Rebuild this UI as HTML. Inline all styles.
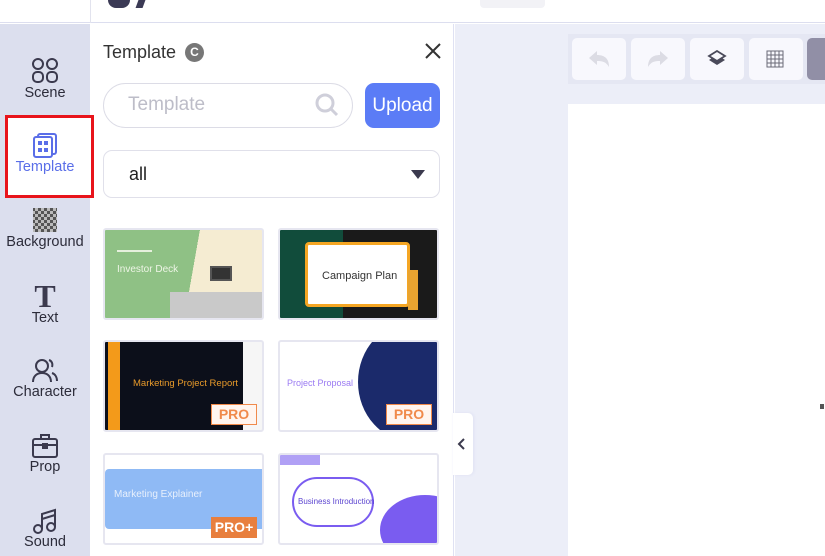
<!DOCTYPE html>
<html><head><meta charset="utf-8"><style>
*{margin:0;padding:0;box-sizing:border-box}
body{width:825px;height:556px;overflow:hidden;position:relative;background:#fff;font-family:"Liberation Sans",sans-serif}
.abs{position:absolute}
#top{left:0;top:0;width:825px;height:23px;background:#fff;border-bottom:1px solid #dcdeef}
#side{left:0;top:24px;width:90px;height:532px;background:#dcdfee}
.it{position:absolute;left:0;width:90px;text-align:center;font-size:14.5px;color:#2c2c3a;z-index:3}
.it svg{display:block;margin:0 auto}
#panel{left:90px;top:24px;width:364px;height:532px;background:#fff;border-right:1px solid #dfe1f3}
#canvasbg{left:455px;top:24px;width:370px;height:532px;background:#eceef8}
.btn{position:absolute;top:38px;width:54px;height:42px;background:#f8f8fd;border-radius:5px}
.card{position:absolute;width:161px;height:92px;border-radius:3px;border:2px solid #e6e6f0;overflow:hidden}
.pro{position:absolute;right:5px;bottom:5px;width:46px;height:21px;border:1.5px solid #f08a4b;background:#fff5ef;color:#f08a4b;font-weight:bold;font-size:14px;text-align:center;line-height:18px}
</style></head><body>
<div id="top" class="abs"></div>
<div class="abs" style="left:90px;top:0;width:1px;height:23px;background:#e2e3ee"></div>
<div class="abs" style="left:108px;top:0;width:22px;height:8px;background:#3b3a55;border-radius:0 0 8px 8px"></div>
<div class="abs" style="left:137px;top:0;width:7px;height:8px;background:#3b3a55;transform:skewX(-20deg)"></div>
<div class="abs" style="left:480px;top:0;width:65px;height:8px;background:#f2f2f6;border-radius:0 0 4px 4px"></div>

<div id="side" class="abs"></div>
<div id="panel" class="abs"></div>
<div class="abs" style="left:5px;top:115px;width:89px;height:83px;border:3px solid #e8141b;background:#fff;z-index:2"></div>
<div class="it" style="top:58px"><svg width="28" height="26" viewBox="0 0 28 26" fill="none" stroke="#3b3a4e" stroke-width="2"><rect x="2" y="1" width="10" height="10" rx="5"/><rect x="16" y="1" width="10" height="10" rx="5"/><rect x="2" y="14" width="10" height="10" rx="4"/><rect x="16" y="14" width="10" height="10" rx="4"/></svg><div style="margin-top:1px">Scene</div></div>
<div class="it" style="top:133px;color:#5a6ee8"><svg width="26" height="26" viewBox="0 0 26 26"><rect x="6" y="1" width="18" height="20" rx="2" fill="none" stroke="#5a6ee8" stroke-width="2"/><rect x="2" y="4" width="18" height="20" rx="2" fill="#fff" stroke="#5a6ee8" stroke-width="2"/><rect x="6" y="8" width="4" height="4" fill="#5a6ee8"/><rect x="12" y="8" width="4" height="4" fill="#5a6ee8"/><rect x="6" y="15" width="4" height="4" fill="#5a6ee8"/><rect x="12" y="15" width="4" height="4" fill="#5a6ee8"/></svg><div>Template</div></div>
<div class="it" style="top:208px"><svg width="26" height="24" viewBox="0 0 26 24"><defs><pattern id="ck" width="6" height="6" patternUnits="userSpaceOnUse"><rect width="3" height="3" fill="#555"/><rect x="3" y="3" width="3" height="3" fill="#555"/><rect x="3" width="3" height="3" fill="#bbb"/><rect y="3" width="3" height="3" fill="#bbb"/></pattern></defs><rect x="1" y="0" width="24" height="24" fill="url(#ck)"/></svg><div style="margin-top:2px">Background</div></div>
<div class="it" style="top:282px"><div style="font-family:'Liberation Serif',serif;font-weight:bold;font-size:32px;line-height:28px;color:#3b3a4e">T</div><div>Text</div></div>
<div class="it" style="top:358px"><svg width="28" height="26" viewBox="0 0 28 26" fill="none" stroke="#3b3a4e" stroke-width="2"><circle cx="11" cy="8" r="6"/><path d="M2 24c0-6 4-9 9-9s9 3 9 9M18 2c3 1 4 4 3 7M21 15c3 1 5 4 5 8"/></svg><div>Character</div></div>
<div class="it" style="top:433px"><svg width="28" height="26" viewBox="0 0 28 26" fill="none" stroke="#3b3a4e" stroke-width="2"><rect x="2" y="6" width="24" height="18" rx="2"/><path d="M10 6V2h8v4M2 12h24"/><rect x="12" y="11" width="4" height="4" fill="#3b3a4e"/></svg><div>Prop</div></div>
<div class="it" style="top:508px"><svg width="28" height="26" viewBox="0 0 28 26" fill="none" stroke="#3b3a4e" stroke-width="2"><circle cx="7" cy="21" r="4"/><circle cx="20" cy="19" r="4"/><path d="M11 21V6l13-4v17M11 11l13-4"/></svg><div>Sound</div></div>

<div class="abs" style="left:103px;top:42px;font-size:18px;color:#333">Template</div>
<div class="abs" style="left:185px;top:43px;width:19px;height:19px;border-radius:50%;background:#777;color:#fff;font-size:12px;font-weight:bold;text-align:center;line-height:19px">C</div>
<svg class="abs" style="left:424px;top:42px" width="18" height="18" viewBox="0 0 18 18" stroke="#333" stroke-width="2"><path d="M2 2l14 14M16 2L2 16"/></svg>
<div class="abs" style="left:103px;top:83px;width:250px;height:45px;border:1px solid #dcdce6;border-radius:23px"></div>
<div class="abs" style="left:128px;top:94px;font-size:19px;color:#bdbdc8">Template</div>
<svg class="abs" style="left:314px;top:92px" width="26" height="26" viewBox="0 0 26 26" fill="none" stroke="#cfcfda" stroke-width="3"><circle cx="11" cy="11" r="8"/><path d="M17 17l6 6"/></svg>
<div class="abs" style="left:365px;top:83px;width:75px;height:45px;background:#5b7cf6;border-radius:9px;color:#fff;font-size:19px;text-align:center;line-height:45px">Upload</div>
<div class="abs" style="left:103px;top:150px;width:337px;height:48px;border:1px solid #e0e0ea;border-radius:9px"></div>
<div class="abs" style="left:129px;top:164px;font-size:18px;color:#222">all</div>
<div class="abs" style="left:411px;top:170px;width:0;height:0;border-left:7px solid transparent;border-right:7px solid transparent;border-top:9px solid #3b3a4e"></div>

<div class="card" style="left:103px;top:228px;background:linear-gradient(100deg,#8fc185 0 55%,#f5ecd2 55%)"><div class="abs" style="left:12px;top:20px;width:35px;height:2px;background:#e6f0dd"></div><div class="abs" style="left:12px;top:34px;font-size:10px;color:#eef5e6">Investor Deck</div><div class="abs" style="left:65px;top:62px;width:94px;height:30px;background:#c9c9c9"></div><div class="abs" style="left:105px;top:36px;width:22px;height:15px;background:#333;border:2px solid #555"></div></div>
<div class="card" style="left:278px;top:228px;background:linear-gradient(90deg,#114c3b 0 40%,#1a1a1a 40%)"><div class="abs" style="left:25px;top:12px;width:105px;height:65px;background:#fff;border:3px solid #f5a623;border-radius:4px"></div><div class="abs" style="left:42px;top:40px;font-size:11px;color:#333">Campaign Plan</div><div class="abs" style="left:128px;top:40px;width:10px;height:40px;background:#e8a330"></div></div>
<div class="card" style="left:103px;top:340px;background:linear-gradient(90deg,#0c0f1a 0 88%,#f6f6f6 88%)"><div class="abs" style="left:3px;top:0;width:12px;height:92px;background:#f39a1a"></div><div class="abs" style="left:28px;top:36px;font-size:9.5px;color:#e89a2a">Marketing Project Report</div><div class="pro">PRO</div></div>
<div class="card" style="left:278px;top:340px;background:#fff"><div class="abs" style="left:78px;top:-20px;width:110px;height:120px;border-radius:50%;background:#1b2a6b"></div><div class="abs" style="left:7px;top:36px;font-size:9px;color:#9a7af2">Project Proposal</div><div class="pro">PRO</div></div>
<div class="card" style="left:103px;top:453px;background:#fff"><div class="abs" style="left:0;top:14px;width:161px;height:60px;background:#8fbaf5;border-radius:4px"></div><div class="abs" style="left:9px;top:34px;font-size:10px;color:#e8f0fc">Marketing Explainer</div><div class="abs" style="right:5px;bottom:5px;width:46px;height:21px;background:#e87f3e;color:#fff;font-weight:bold;font-size:14px;text-align:center;line-height:21px">PRO+</div></div>
<div class="card" style="left:278px;top:453px;background:#fff"><div class="abs" style="left:100px;top:40px;width:90px;height:70px;border-radius:50%;background:#7a5cf0"></div><div class="abs" style="left:0;top:0;width:40px;height:10px;background:#b0a0f5"></div><div class="abs" style="left:12px;top:22px;width:82px;height:50px;background:#fff;border:2px solid #7a5cf0;border-radius:25px"></div><div class="abs" style="left:18px;top:42px;font-size:8px;color:#5c45d0">Business Introduction</div></div>

<div id="canvasbg" class="abs"></div>
<div class="abs" style="left:453px;top:413px;width:20px;height:62px;background:#fff;border-radius:0 5px 5px 0;box-shadow:1px 0 3px #dfe1f3"></div>
<svg class="abs" style="left:457px;top:437px" width="10" height="14" viewBox="0 0 10 14" fill="none" stroke="#3b3a4e" stroke-width="2"><path d="M7 2L2 7l5 5"/></svg>
<div class="abs" style="left:568px;top:34px;width:257px;height:50px;background:#e5e7f3"></div>
<div class="btn" style="left:572px"><svg style="margin:12px 15px" width="24" height="18" viewBox="0 0 24 18"><path d="M2 8L10 1v4c8 0 12 4 12 12c-3-5-6-6-12-6v4z" fill="#dcdce4"/></svg></div>
<div class="btn" style="left:631px"><svg style="margin:12px 15px" width="24" height="18" viewBox="0 0 24 18"><path d="M22 8L14 1v4C6 5 2 9 2 17c3-5 6-6 12-6v4z" fill="#dcdce4"/></svg></div>
<div class="btn" style="left:690px"><svg style="margin:12px 16px" width="22" height="18" viewBox="0 0 22 18"><path d="M11 1l8 5-8 5-8-5z" fill="none" stroke="#4a4a5a" stroke-width="1.8"/><path d="M3 10l8 5 8-5-3-2-5 3-5-3z" fill="#4a4a5a"/></svg></div>
<div class="btn" style="left:749px"><svg style="margin:12px 17px" width="18" height="18" viewBox="0 0 18 18" fill="none" stroke="#6a6a78" stroke-width="1"><rect x="1" y="1" width="16" height="16"/><path d="M5 1v16M9 1v16M13 1v16M1 5h16M1 9h16M1 13h16"/></svg></div>
<div class="btn" style="left:807px;background:#918fa6;width:30px"></div>
<div class="abs" style="left:568px;top:104px;width:257px;height:452px;background:#fff"></div>
<div class="abs" style="left:820px;top:404px;width:4px;height:5px;background:#555"></div>
</body></html>
